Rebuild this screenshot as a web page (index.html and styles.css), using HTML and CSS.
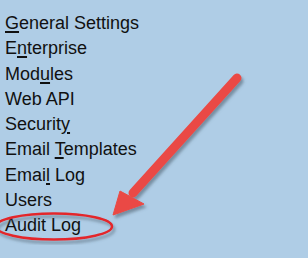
FILE: index.html
```html
<!DOCTYPE html>
<html lang="en">
<head>
    <meta charset="UTF-8">
    <title>Settings menu</title>
    <link rel="stylesheet" href="styles.css">
</head>
<body>

    <!-- Menu list -->
    <div class="menu">
        <div class="item"><u>G</u>eneral Settings</div>
        <div class="item">E<u>n</u>terprise</div>
        <div class="item">Mod<u>u</u>les</div>
        <div class="item">Web API</div>
        <div class="item">Securit<u>y</u></div>
        <div class="item">Email <u>T</u>emplates</div>
        <div class="item">Emai<u>l</u> Log</div>
        <div class="item">Users</div>
        <div class="item">Audit Log</div>
    </div>

    <!-- Annotation -->
    <svg class="markup" width="308" height="258" viewBox="0 0 308 258">
        <defs>
            <filter id="shadow" x="-20%" y="-20%" width="140%" height="140%">
                <feDropShadow dx="2" dy="3" stdDeviation="1.6" flood-color="#4a5a66" flood-opacity="0.55"/>
            </filter>
        </defs>
        <ellipse cx="54" cy="226.5" rx="58" ry="13" fill="none" stroke="#e3262a" stroke-width="2.5" filter="url(#shadow)"/>
        <g filter="url(#shadow)" fill="#ea4a44" stroke="#ea4a44">
            <line x1="237" y1="78" x2="133" y2="193" stroke-width="9" stroke-linecap="round"/>
            <polygon points="113,215 120,191 144,204" stroke-width="1" stroke-linejoin="round"/>
        </g>
    </svg>

</body>
</html>
```

FILE: styles.css
```css
body {
    font-family: "Liberation Sans", Arial, sans-serif;
    background-color: #afcde6;
    margin: 0;
    padding: 0;
    width: 308px;
    height: 258px;
    overflow: hidden;
    position: relative;
}
/* Menu */
.menu {
    padding: 11px 0 0 5px;
}
.item {
    font-size: 18px;
    line-height: 25.3px;
    color: #111;
}
.item u {
    text-decoration-thickness: 2px;
    text-underline-offset: 2px;
}
/* Arrow + circle */
.markup {
    position: absolute;
    top: 0;
    left: 0;
}
```
